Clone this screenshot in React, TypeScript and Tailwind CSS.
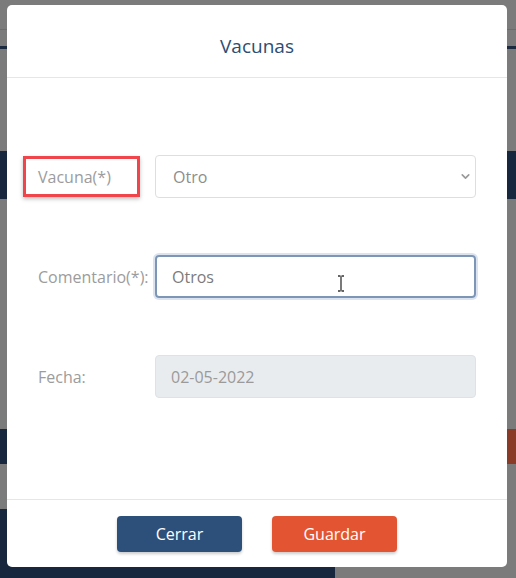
import { ChevronDown } from 'lucide-react';

const font = { fontFamily: '"Open Sans", "Noto Sans", sans-serif' };

const labelClass = 'w-[117px] shrink-0 text-[16px] text-[#9c9c9c]';
const fieldClass =
  'flex h-[43px] flex-1 items-center rounded-[4px] px-[15px] text-[16px]';

function Backdrop() {
  return (
    <div className="flex h-[578px] w-[516px] flex-col bg-[#7b7b7b]">
      <div className="h-[30px] border-b border-[#6c6c6c]" />
      <div className="mt-[16px] h-[3px] bg-[#1b2a3f]" />
      <div className="h-[102px]" />
      <div className="h-[48px] bg-[#17273d]" />
      <div className="h-[230px]" />
      <div className="flex h-[35px]">
        <div className="flex-1 bg-[#17273d]" />
        <div className="w-[60px] bg-[#8a3b27]" />
      </div>
      <div className="h-[45px]" />
      <div className="flex flex-1">
        <div className="w-[335px] bg-[#17273d]" />
        <div className="flex-1" />
      </div>
    </div>
  );
}

function Row({ label, children, highlight }: { label: string; children: React.ReactNode; highlight?: boolean }) {
  return (
    <div className="flex items-center">
      <div className={`${labelClass} relative`}>
        {highlight && (
          <div className="absolute left-[-15px] top-[-9px] h-[41px] w-[117px] border-[3px] border-[#f0454b] shadow-[0_2px_4px_rgba(0,0,0,0.25)]" />
        )}
        {label}
      </div>
      {children}
    </div>
  );
}

export default function App() {
  return (
    <div className="relative h-[578px] w-[516px] overflow-hidden" style={font}>
      <Backdrop />

      <div className="absolute left-[7px] top-[5px] flex h-[562px] w-[500px] flex-col rounded-[5px] bg-white">
        <div className="flex h-[73px] shrink-0 items-center justify-center border-b border-[#e6e6e6] pt-[10px]">
          <h2 className="text-[19px] text-[#2e4d72]">Vacunas</h2>
        </div>

        <div className="flex flex-1 flex-col gap-[57px] px-[31px] pt-[77px]">
          <Row label="Vacuna(*)" highlight>
            <div className={`${fieldClass} justify-between border border-[#dedede] text-[#8d8d8d]`}>
              <span className="pl-[2px]">Otro</span>
              <ChevronDown size={13} strokeWidth={3} className="mr-[-12px] text-[#9a9a9a]" />
            </div>
          </Row>

          <Row label="Comentario(*):">
            <div className={`${fieldClass} relative border-2 border-[#7e96b6] text-[#7b7b7b] shadow-[0_0_0_2px_rgba(150,175,210,0.35)]`}>
              <span>Otros</span>
              <svg
                className="absolute left-[180px] top-[18px]"
                width="8"
                height="17"
                viewBox="0 0 8 17"
              >
                <path d="M1 1h2.5M4.5 1H7M4 1.5v14M1 16h2.5M4.5 16H7" stroke="#333" strokeWidth="1.3" fill="none" />
              </svg>
            </div>
          </Row>

          <Row label="Fecha:">
            <div className={`${fieldClass} border border-[#dfe2e5] bg-[#e9ecef] text-[#9a9a9a]`}>
              <span>02-05-2022</span>
            </div>
          </Row>
        </div>

        <div className="flex h-[68px] shrink-0 items-center justify-center gap-[30px] border-t border-[#e6e6e6]">
          <button className="h-[36px] w-[125px] rounded-[4px] bg-[#2c5079] text-[16px] font-medium text-white shadow-[0_2px_3px_rgba(0,0,0,0.2)]">
            Cerrar
          </button>
          <button className="h-[36px] w-[125px] rounded-[4px] bg-[#e35532] text-[16px] font-medium text-white shadow-[0_2px_3px_rgba(0,0,0,0.2)]">
            Guardar
          </button>
        </div>
      </div>
    </div>
  );
}
